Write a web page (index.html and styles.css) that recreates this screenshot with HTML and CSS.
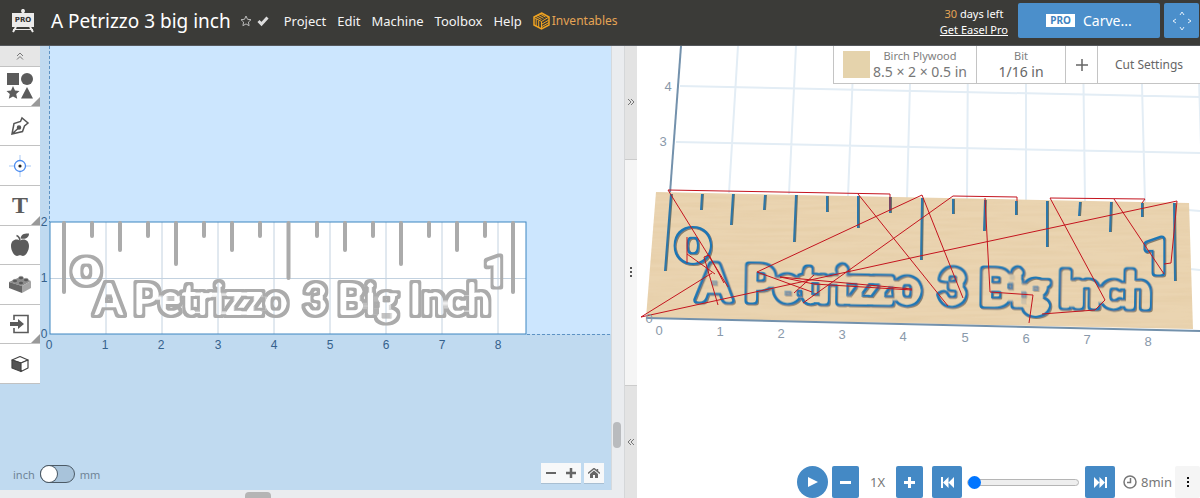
FILE: index.html
```html
<!DOCTYPE html>
<html lang="en">
<head>
    <meta charset="UTF-8">
    <meta name="viewport" content="width=device-width, initial-scale=1.0">
    <title>A Petrizzo 3 big inch - Easel</title>
    <link rel="stylesheet" href="styles.css">
</head>
<body>
    <header class="topbar">
        <a href="#" class="logo" aria-label="Easel Pro">
            <svg width="24" height="24" viewBox="0 0 24 24">
                <path d="M12 0v4M5 18L2 23M19 18l3 5" stroke="#ecebea" stroke-width="2"/>
                <circle cx="12" cy="2" r="2" fill="#ecebea"/>
                <rect x="1" y="4" width="22" height="14" fill="#ecebea"/>
                <path d="M2 20.500h20" stroke="#ecebea" stroke-width="1"/>
                <text x="12" y="13" class="logo-text">PRO</text>
            </svg>
        </a>
        <h1>A Petrizzo 3 big inch</h1>
        <button class="icon-btn" aria-label="Favorite">
            <svg width="12" height="12" viewBox="0 0 12 12"><path d="M6 1l1.500 3.300 3.500.4-2.600 2.400.7 3.600L6 8.900l-3.100 1.800.7-3.600L1 4.700l3.500-.4z" fill="none" stroke="#bbb"/></svg>
        </button>
        <button class="icon-btn" aria-label="Saved">
            <svg width="12" height="12" viewBox="0 0 12 12"><path d="M1.500 6l3 3 6-6.500" fill="none" stroke="#ddd" stroke-width="3"/></svg>
        </button>
        <nav>
            <a href="#project">Project</a>
            <a href="#edit">Edit</a>
            <a href="#machine">Machine</a>
            <a href="#toolbox">Toolbox</a>
            <a href="#help">Help</a>
            <a href="#inventables" class="brand">
                <svg width="17" height="18" viewBox="0 0 17 18" fill="none" stroke="#f0a320">
                    <path d="M8.500 1L16 5v8l-7.500 4L1 13V5z" stroke-width="1.500"/>
                    <path d="M8.500 9.500V17M8.500 9.500L1 5.500M8.500 9.500L16 5M3 4.500l5.500 3M5 3.300l5.500 3M7 2l5.500 3M3.200 7v7M5.700 8.500v7M9 12l7-4M9 14.500l7-4"/>
                </svg>
                Inventables
            </a>
        </nav>
        <div class="trial">
            <span><b>30</b> days left</span>
            <a href="#pro">Get Easel Pro</a>
        </div>
        <button class="carve"><span class="pro-tag">PRO</span>Carve...</button>
        <button class="jog" aria-label="Jog machine">
            <svg width="20" height="20" viewBox="0 0 20 20" fill="none" stroke="#e4f0fa"><path d="M8 4l2-3 2 3M8 16l2 3 2-3M4 8l-3 2 3 2M16 8l3 2-3 2"/></svg>
        </button>
    </header>

    <main class="workspace">
        <section class="design">
            <div class="stage">
                <div class="tools">
                    <button class="tool collapse" aria-label="Collapse">
                        <svg width="8" height="8" viewBox="0 0 8 8" fill="none" stroke="#777"><path d="M1 4l3-3 3 3M1 7.500l3-3 3 3"/></svg>
                    </button>
                    <button class="tool more" aria-label="Shapes">
                        <svg width="28" height="28" viewBox="0 0 28 28" fill="#5b5b5b">
                            <rect x="1" y="1" width="12" height="12"/><circle cx="21" cy="7" r="6"/>
                            <path d="M7 14l2 4.500 4.500.5-3.300 3 1 4.800L7 24.400l-4.200 2.400 1-4.800-3.300-3 4.500-.5zM21 15l6 11.500H15z"/>
                        </svg>
                    </button>
                    <button class="tool" aria-label="Pen">
                        <svg width="20" height="20" viewBox="0 0 20 20" fill="none" stroke="#555" stroke-width="1.500">
                            <path d="M2 18L4 7.500l6.500-2L12 2l6 5-3.500 3-2 5.500zM2 18l6.500-6"/><circle cx="9" cy="11.500" r="1.500" fill="#555"/>
                        </svg>
                    </button>
                    <button class="tool" aria-label="Point">
                        <svg width="22" height="22" viewBox="0 0 22 22">
                            <path d="M11 0v6M11 16v6M0 11h6M16 11h6" stroke="#a9c9f5"/>
                            <circle cx="11" cy="11" r="5.500" fill="#fff" stroke="#4a8bf0" stroke-width="1.300"/><circle cx="11" cy="11" r="1.600" fill="#222"/>
                        </svg>
                    </button>
                    <button class="tool more letter">T</button>
                    <button class="tool" aria-label="Icons">
                        <svg width="20" height="24" viewBox="0 0 20 24" fill="#5b5b5b">
                            <path d="M10 8C13 5 19 6.500 19 13c0 5-3.500 10-6 10-1.500 0-2-.7-3-.7s-1.500.7-3 .7c-2.500 0-6-5-6-10C1 6.500 7 5 10 8z"/>
                            <path d="M10.500 5.500C11 1.500 14 .3 19 .5c0 4-3 6-8.500 5z"/><path d="M10 8.500C10 5 9 3.500 6.500 2.500" fill="none" stroke="#5b5b5b" stroke-width="1.500"/>
                        </svg>
                    </button>
                    <button class="tool" aria-label="Apps">
                        <svg width="22" height="18" viewBox="0 0 22 18">
                            <path d="M0 7l11-5 11 4-9 5z" fill="#8c8c8c"/><path d="M0 7l13 4v7L0 13z" fill="#666"/><path d="M13 11l9-5v7l-9 5z" fill="#a5a5a5"/>
                            <g fill="#5a5a5a" stroke="#a0a0a0" stroke-width=".5"><ellipse cx="6" cy="6" rx="2.500" ry="1.800"/><ellipse cx="12" cy="3" rx="2.500" ry="1.800"/><ellipse cx="12" cy="8" rx="2.500" ry="1.800"/><ellipse cx="17" cy="5" rx="2.500" ry="1.800"/></g>
                        </svg>
                    </button>
                    <button class="tool more" aria-label="Import">
                        <svg width="20" height="20" viewBox="0 0 20 20">
                            <path d="M4 6V1.500h14v17H4V14" fill="none" stroke="#5b5b5b" stroke-width="1.600"/><path d="M0 8h8V5l6 5-6 5v-3H0z" fill="#5b5b5b"/>
                        </svg>
                    </button>
                    <button class="tool" aria-label="3D">
                        <svg width="18" height="18" viewBox="0 0 18 18" stroke="#444" stroke-width="1.200" stroke-linejoin="round">
                            <path d="M1 5l8-3.500L17 5l-7 3z" fill="#fff"/><path d="M1 5l9 3v8.500L1 13z" fill="#555"/><path d="M10 8l7-3v8l-7 3.500z" fill="#fff"/>
                        </svg>
                    </button>
                </div>

                <svg class="canvas" viewBox="40 46 571 444" preserveAspectRatio="xMinYMin slice">
                    <defs>
                        <filter id="outline" x="-10%" y="-20%" width="120%" height="140%">
                            <feMorphology in="SourceGraphic" operator="dilate" radius="1" result="outer"/>
                            <feMorphology in="SourceGraphic" operator="erode" radius="2" result="inner"/>
                            <feComposite in="outer" in2="inner" operator="out"/>
                        </filter>
                    </defs>
                    <rect x="50" y="46" width="600" height="288" fill="#cce6fe"/>
                    <path d="M49.500 46v176M527 334.500h90" class="dashed"/>
                    <rect x="50" y="222" width="476" height="112" fill="#fff"/>
                    <path d="M106 222v112M162 222v112M218 222v112M274 222v112M330 222v112M386 222v112M442 222v112M498 222v112M50 278.500h476" class="grid"/>
                    <rect x="50" y="222" width="476" height="112" class="edge"/>
                    <path d="M64 223v69M92 223v13M120 223v27M148 223v13M176 223v41M204 223v13M232 223v27M260 223v13M288.500 223v55M317 223v13M345 223v27M373 223v13M401 223v41M429 223v13M457 223v27M485 223v13M513 223v69" class="ticks"/>
                    <text x="71" y="284" class="carving digit-o">O</text>
                    <text x="484" y="286" class="carving digit-one">1</text>
                    <text y="315" class="carving"><tspan x="94">A</tspan> <tspan x="133">Petrizzo</tspan> <tspan x="303">3</tspan> <tspan x="337">Big</tspan> <tspan x="409">Inch</tspan></text>
                    <g class="scale">
                        <text x="49" y="349">0</text><text x="105" y="349">1</text><text x="161" y="349">2</text>
                        <text x="218" y="349">3</text><text x="274" y="349">4</text><text x="330" y="349">5</text>
                        <text x="386" y="349">6</text><text x="442" y="349">7</text><text x="498" y="349">8</text>
                        <text x="44" y="226">2</text><text x="44" y="282">1</text><text x="44" y="338">0</text>
                    </g>
                </svg>

                <label class="units">inch <input type="checkbox" aria-label="Use mm"><span class="switch"></span> mm</label>
                <div class="zoom">
                    <div class="zoom-pair">
                        <button aria-label="Zoom out"><svg width="10" height="10" viewBox="0 0 10 10"><path d="M0 5h10" stroke="#666" stroke-width="2"/></svg></button>
                        <button aria-label="Zoom in"><svg width="10" height="10" viewBox="0 0 10 10"><path d="M0 5h10M5 0v10" stroke="#666" stroke-width="2.500"/></svg></button>
                    </div>
                    <button aria-label="Home view"><svg width="12" height="10" viewBox="0 0 12 10"><path d="M0 5.500L6 .5l6 5M9.500 1v3" fill="none" stroke="#666" stroke-width="1.400"/><path d="M2 6l4-3.500L10 6v4H7V7H5v3H2z" fill="#666"/></svg></button>
                </div>
            </div>
            <div class="vscroll"><span></span></div>
            <div class="hscroll"><span></span></div>
        </section>

        <div class="splitter">
            <button aria-label="Collapse preview">
                <svg width="8" height="8" viewBox="0 0 8 8" fill="none" stroke="#777"><path d="M1 1l3 3-3 3M4 1l3 3-3 3"/></svg>
            </button>
            <div class="handle"><i></i><i></i><i></i></div>
            <button aria-label="Collapse design">
                <svg width="8" height="8" viewBox="0 0 8 8" fill="none" stroke="#777"><path d="M4 1L1 4l3 3M7 1L4 4l3 3"/></svg>
            </button>
        </div>

        <section class="preview">
            <svg class="canvas" viewBox="637 46 563 452" preserveAspectRatio="xMinYMin slice">
                <defs>
                    <filter id="groove" x="-10%" y="-20%" width="120%" height="140%">
                        <feMorphology in="SourceGraphic" operator="erode" radius="2" result="inner"/>
                        <feComposite in="SourceGraphic" in2="inner" operator="out" result="ring"/>
                        <feOffset in="ring" dx="1" dy="1" result="offset"/>
                        <feFlood flood-color="#8a7f68"/>
                        <feComposite in2="offset" operator="in" result="shade"/>
                        <feMerge><feMergeNode in="shade"/><feMergeNode in="ring"/></feMerge>
                    </filter>
                    <filter id="wood" x="0" y="0" width="100%" height="100%">
                        <feTurbulence type="fractalNoise" baseFrequency=".015 .250" numOctaves="2" seed="4"/>
                        <feColorMatrix values="0 0 0 0 .65  0 0 0 0 .45  0 0 0 0 .2  .35 0 0 0 -.12"/>
                        <feComposite in2="SourceGraphic" operator="in" result="grain"/>
                        <feMerge><feMergeNode in="SourceGraphic"/><feMergeNode in="grain"/></feMerge>
                    </filter>
                </defs>
                <path d="M738 46l-9 147M796 46l-7 148M854 46l-6 150M911 46l-4 152M968 46l-1 153M1026 46v154M1083 46l2 155M1141 46l4 156M1198 46l6 200M680 86l520 11M676 142l524 11M1188 210l12 1M1190 269l10 1" class="grid3d"/>
                <path d="M681 46l-11 147" class="axis"/>
                <path d="M656 192l533 11 4 126-547-11z" class="board"/>
                <path d="M646 318l554 13" class="axis"/>
                <path d="M671 194l-6 77M702 194l-1 16M733 194l-2 31M765 195l-1 15M796 195l-2 47M827 196v16M858 196v32M890 197v16M922 198l-1 62M953 199v15M985 200l-1 31M1016 201v14M1047 201v46M1080 202l-1 14M1111 202l-1 30M1142 203v14M1174 203l1 78" class="slots"/>
                <text x="675" y="261" class="carving cut cut-o">O</text>
                <text x="1143" y="273" class="carving cut cut-one">1</text>
                <text y="300" transform="rotate(1 693 300)" class="carving cut"><tspan x="697">A</tspan> <tspan x="744">Petrizzo</tspan> <tspan x="938">3</tspan> <tspan x="979">Big</tspan> <tspan x="1058">Inch</tspan></text>
                <g class="moves">
                    <path d="M728 287L668 190l222 4v17M641 317l71-44M641 317l279-61 257-55-6 62-7 1M687 237v26M687 254l28 20M704 257l14 48M704 257l5-2 15 28"/>
                    <path d="M757 272l165-77 41 103M757 272l55 20M780 277l132 12M780 277l34 7 98 6M803 303l150-107 64 1v4M858 194l90 112M794 293l20-18"/>
                    <path d="M985 198l5 94 43 3-4 28M1042 314l53-4 10-10-55-102 95 1-3 4M1114 199l50 75"/>
                </g>
                <g class="scale scale3d">
                    <text x="668" y="91">4</text><text x="663" y="146">3</text><text x="649" y="323">0</text>
                    <text x="659" y="335">0</text><text x="720" y="336">1</text><text x="781" y="338">2</text>
                    <text x="842" y="339">3</text><text x="903" y="341">4</text><text x="965" y="342">5</text>
                    <text x="1026" y="343">6</text><text x="1087" y="344">7</text><text x="1148" y="346">8</text>
                </g>
            </svg>

            <div class="job">
                <button class="material"><span class="swatch"></span><span><small>Birch Plywood</small>8.5 × 2 × 0.5 in</span></button>
                <button class="bit"><span><small>Bit</small>1/16 in</span></button>
                <button class="add" aria-label="Add bit"><svg width="12" height="12" viewBox="0 0 12 12"><path d="M0 6h12M6 0v12" stroke="#666" stroke-width="1.500"/></svg></button>
                <button class="cut-settings">Cut Settings</button>
            </div>

            <div class="player">
                <button class="play" aria-label="Play"><svg width="10" height="12" viewBox="0 0 10 12"><path d="M0 1l10 5-10 5z" fill="#fff"/></svg></button>
                <button aria-label="Slower"><svg width="11" height="11" viewBox="0 0 11 11"><path d="M0 5.500h11" stroke="#fff" stroke-width="3"/></svg></button>
                <span class="speed">1X</span>
                <button aria-label="Faster"><svg width="11" height="11" viewBox="0 0 11 11"><path d="M0 5.500h11M5.500 0v11" stroke="#fff" stroke-width="3"/></svg></button>
                <button class="skip" aria-label="Restart"><svg width="13" height="11" viewBox="0 0 13 11" fill="#fff"><path d="M0 0h2v11H0zM7.500 0v11L2 5.500zM13 0v11L7.500 5.500z"/></svg></button>
                <input type="range" min="0" max="100" value="0" aria-label="Progress">
                <button class="skip" aria-label="End"><svg width="13" height="11" viewBox="0 0 13 11" fill="#fff"><path d="M11 0h2v11h-2zM5.500 0v11L11 5.500zM0 0v11l5.500-5.500z"/></svg></button>
                <span class="time"><svg width="14" height="14" viewBox="0 0 14 14" fill="none" stroke="#777" stroke-width="1.500"><circle cx="7" cy="7" r="6"/><path d="M7.500 3v4.500H4"/></svg>8min</span>
                <button class="menu" aria-label="More"><i></i><i></i><i></i></button>
            </div>
        </section>
    </main>
</body>
</html>
```
FILE: styles.css
```css
* {
    margin: 0;
    padding: 0;
    box-sizing: border-box;
}

body {
    display: flex;
    flex-direction: column;
    height: 100vh;
    overflow: hidden;
    font-family: "Noto Sans", sans-serif;
    font-size: 13px;
    color: #666;
    background-color: #fff;
}

button {
    border: none;
    background: none;
    font: inherit;
    color: inherit;
    cursor: pointer;
    display: flex;
    align-items: center;
    justify-content: center;
}

svg {
    display: block;
    flex: none;
}

/* Header */
.topbar {
    display: flex;
    align-items: center;
    flex: none;
    height: 46px;
    padding: 0 1px 4px 11px;
    background-color: #3b3b38;
    border-bottom: 1px solid #55585c;
    color: #fff;
    white-space: nowrap;
}

.logo-text {
    font: bold 7px "DejaVu Sans", sans-serif;
    text-anchor: middle;
    fill: #333;
}

.topbar h1 {
    margin: 0 9px 0 16px;
    font-size: 19px;
    font-weight: 400;
}

.icon-btn {
    margin-right: 5px;
}

nav {
    display: flex;
    gap: 11px;
    margin-left: 10px;
}

nav a {
    color: #f4f4f4;
    text-decoration: none;
}

nav .brand {
    display: flex;
    align-items: center;
    gap: 2px;
    font-size: 12px;
    color: #e5a455;
}

.trial {
    display: flex;
    flex-direction: column;
    align-items: center;
    margin: 2px 10px 0 auto;
    font-size: 11px;
    line-height: 16px;
}

.trial b {
    font-weight: 400;
    color: #e5a455;
}

.trial a {
    color: #fff;
}

.carve,
.jog {
    height: 35px;
    border-radius: 2px;
    background-color: #4b8fcb;
    color: #fff;
}

.carve {
    width: 142px;
    gap: 8px;
    margin-right: 4px;
    font-size: 14px;
}

.jog {
    width: 35px;
}

.pro-tag {
    padding: 0 4px;
    background-color: #fff;
    color: #3f83bf;
    font-size: 10px;
    font-weight: 700;
    line-height: 13px;
}

/* Workspace */
.workspace {
    display: flex;
    flex: 1;
    min-height: 0;
}

.design {
    display: grid;
    grid-template-columns: 1fr 13px;
    grid-template-rows: 1fr 8px;
    width: 52%;
    background-color: #eaecef;
}

.stage {
    position: relative;
    display: flex;
    align-items: flex-start;
    min-width: 0;
    min-height: 0;
    background-color: #c0daf0;
    overflow: hidden;
}

.canvas {
    flex: 1;
    min-width: 0;
    height: 100%;
}

.tools {
    display: grid;
    grid-template-rows: 21px repeat(8, 1fr);
    width: 40px;
    height: 338px;
    flex: none;
}

.tool {
    position: relative;
    background-color: #fff;
    border-bottom: 1px solid #c2c2c2;
}

.tool.collapse {
    background-color: #e6e6e6;
}

.tool.more::after {
    content: "";
    position: absolute;
    right: 0;
    bottom: 0;
    border-left: 9px solid transparent;
    border-bottom: 9px solid #999;
}

.letter {
    font: bold 24px "Liberation Serif", serif;
    color: #5b5b5b;
}

/* Drawing */
.dashed {
    fill: none;
    stroke: #5d93c4;
    stroke-dasharray: 3 2;
}

.grid {
    fill: none;
    stroke: #c3d2e0;
}

.edge {
    fill: none;
    stroke: #3d85c0;
}

.ticks {
    fill: none;
    stroke: #ababab;
    stroke-width: 4;
    stroke-linecap: round;
}

.carving {
    font: bold 43px Lato, sans-serif;
    fill: #ababab;
    stroke: #ababab;
    stroke-width: 4;
    stroke-linejoin: round;
    filter: url(#outline);
}

.digit-o {
    font: bold 36px "DejaVu Sans", sans-serif;
    stroke-width: 5;
}

.digit-one {
    font: bold 40px Roboto, sans-serif;
    stroke-width: 5;
}

.scale {
    font: 12px "Liberation Sans", sans-serif;
    text-anchor: middle;
    fill: #35618c;
}

.units {
    position: absolute;
    left: 13px;
    bottom: 7px;
    display: flex;
    align-items: center;
    gap: 5px;
    font-size: 11px;
    color: #6f8496;
}

.units input {
    position: absolute;
    opacity: 0;
}

.switch {
    width: 35px;
    height: 18px;
    border: 1px solid #4c5a66;
    border-radius: 9px;
    background-color: #a8c3da;
}

.switch::before {
    content: "";
    display: block;
    width: 16px;
    height: 16px;
    border-radius: 50%;
    background-color: #fff;
    box-shadow: 0 0 0 1px #4c5a66;
}

.units input:checked + .switch::before {
    margin-left: 17px;
}

.zoom {
    position: absolute;
    right: 7px;
    bottom: 7px;
    display: flex;
    gap: 3px;
}

.zoom-pair {
    display: flex;
}

.zoom button {
    width: 20px;
    height: 20px;
    background-color: #f7f8f9;
    box-shadow: 0 1px 0 #a9bfd2;
}

.vscroll {
    border-left: 1px solid #d5d9dd;
    padding: 376px 2px 0 1px;
}

.vscroll span {
    display: block;
    width: 8px;
    height: 26px;
    border-radius: 4px;
    background-color: #b9bbbe;
}

.hscroll {
    grid-column: 1 / 3;
    padding: 2px 0 0 40%;
}

.hscroll span {
    display: block;
    width: 26px;
    height: 8px;
    margin-left: -5px;
    border-radius: 4px 4px 0 0;
    background-color: #b5b5b5;
}

/* Splitter */
.splitter {
    display: flex;
    flex-direction: column;
    flex: none;
    width: 13px;
    background-color: #f5f5f5;
    border-left: 1px solid #d5d7d9;
}

.splitter button {
    flex: 1;
    background-color: #e3e3e3;
}

.handle {
    display: flex;
    flex-direction: column;
    align-items: center;
    justify-content: center;
    gap: 2px;
    flex: 2;
    border: solid #ccc;
    border-width: 1px 0;
}

.handle i,
.menu i {
    width: 2px;
    height: 2px;
    background-color: #555;
}

/* 3D preview */
.preview {
    position: relative;
    display: flex;
    flex: 1;
    min-width: 0;
}

.grid3d {
    fill: none;
    stroke: #e3edf5;
    stroke-width: 2;
}

.axis {
    fill: none;
    stroke: #7391ac;
    stroke-width: 2;
}

.board {
    fill: #ead4b1;
    filter: url(#wood);
}

.slots {
    fill: none;
    stroke: #2c77aa;
    stroke-width: 2;
    filter: drop-shadow(1px 0 0 #6f7468);
}

.cut {
    font-size: 49px;
    fill: #1f77b4;
    stroke: #1f77b4;
    stroke-width: 7;
    filter: url(#groove);
}

.cut-o {
    font: bold 42px "DejaVu Sans", sans-serif;
}

.cut-one {
    font: bold 48px Roboto, sans-serif;
}

.moves {
    fill: none;
    stroke: #c4141e;
}

.scale3d {
    font-size: 13px;
    fill: #8999aa;
}

/* Material and bit bar */
.job {
    position: absolute;
    top: 0;
    right: 0;
    display: flex;
    height: 38px;
    background-color: #fff;
    border: solid #c4c4c4;
    border-width: 0 0 1px 1px;
    font-size: 14px;
    line-height: 17px;
    white-space: nowrap;
}

.job button + button {
    border-left: 1px solid #c4c4c4;
}

.job small {
    display: block;
    font-size: 11px;
    line-height: 14px;
    color: #808080;
}

.material {
    width: 142px;
    gap: 3px;
    color: #777;
}

.swatch {
    width: 27px;
    height: 27px;
    background-color: #e5d3ac;
}

.bit {
    width: 89px;
}

.add {
    width: 32px;
}

.job .cut-settings {
    width: 103px;
    font-size: 12px;
}

/* Playback */
.player {
    position: absolute;
    right: 0;
    bottom: 0;
    display: flex;
    align-items: center;
    height: 32px;
    color: #777;
}

.player button {
    width: 27px;
    height: 32px;
    border-radius: 2px;
    background-color: #4489c5;
}

.player .play {
    width: 31px;
    margin-right: 4px;
    border-radius: 50%;
}

.speed {
    width: 37px;
    text-align: center;
}

.player .skip {
    width: 30px;
}

.player button + .skip {
    margin-left: 9px;
}

.player input {
    appearance: none;
    width: 112px;
    height: 7px;
    margin: 0 6px 0 5px;
    border: 1px solid #b5b5b5;
    border-radius: 4px;
    background-color: #eee;
}

.player input::-webkit-slider-thumb {
    appearance: none;
    width: 13px;
    height: 13px;
    border-radius: 50%;
    background-color: #0075ff;
}

.time {
    display: flex;
    align-items: center;
    gap: 4px;
    margin: 0 3px 0 8px;
}

.player .menu {
    flex-direction: column;
    gap: 2px;
    width: 25px;
    background-color: #f5f5f5;
}

.menu i {
    background-color: #111;
}
```
